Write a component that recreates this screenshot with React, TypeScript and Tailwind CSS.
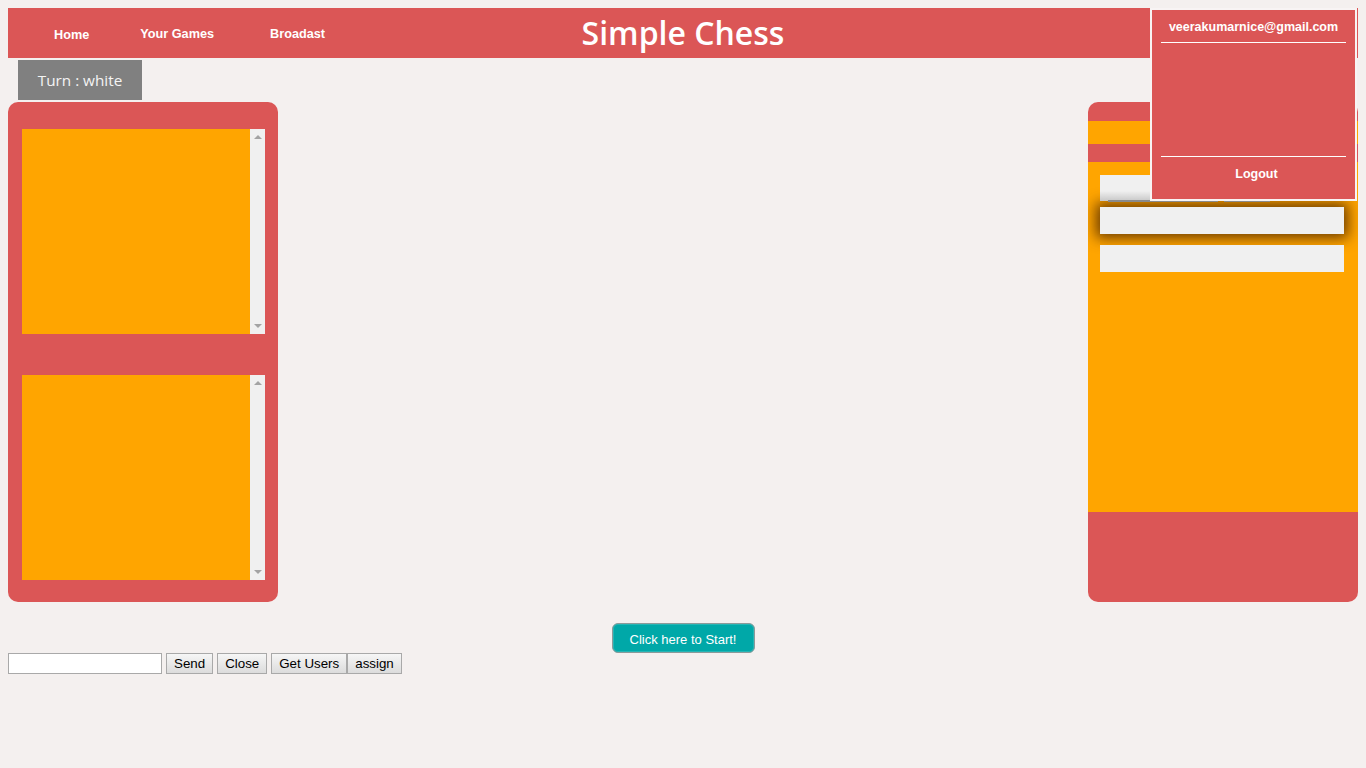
import React from "react";

const sans = "font-['Liberation_Sans',Arial,sans-serif]";

function ScrollBox() {
  return (
    <div className="flex h-[205px] w-[243px]">
      <div className="flex-1 bg-[#ffa500]" />
      <div className="flex w-[15px] flex-col items-center justify-between bg-[#f0f0f0] py-[6px]">
        <div className="h-0 w-0 border-x-[4px] border-b-[4px] border-x-transparent border-b-[#a3a3a3]" />
        <div className="h-0 w-0 border-x-[4px] border-t-[4px] border-x-transparent border-t-[#a3a3a3]" />
      </div>
    </div>
  );
}

export default function App() {
  return (
    <div className={`relative min-h-[768px] bg-[#f4f0ef] pt-2 ${sans}`}>
      {/* header bar */}
      <header className="mx-2 grid h-[50px] grid-cols-[1fr_auto_1fr] items-center bg-[#db5656] text-white">
        <nav className="flex items-center pl-[46px] pt-[3px] text-[12.7px] font-bold">
          <a className="mt-[2px]">Home</a>
          <a className="ml-[51px]">Your Games</a>
          <a className="ml-[56px]">Broadast</a>
        </nav>
        <h1 className="font-['Open_Sans',sans-serif] text-[32px] font-semibold leading-none">Simple Chess</h1>
        <div />
      </header>

      {/* turn indicator */}
      <div className="ml-[18px] mt-[2px] flex h-[40px] w-[124px] items-center justify-center bg-[#808080] font-['Open_Sans',sans-serif] text-[15.3px] text-[#f4f4f4]">
        Turn : white
      </div>

      {/* main area */}
      <div className="mx-2 mt-[2px] flex justify-between">
        <div className="flex h-[500px] w-[270px] flex-col gap-[41px] rounded-[10px] bg-[#db5656] pl-[14px] pt-[27px]">
          <ScrollBox />
          <ScrollBox />
        </div>

        <div className="flex h-[500px] w-[270px] flex-col overflow-hidden rounded-[10px] bg-[#db5656]">
          <div className="h-[19px]" />
          <div className="h-[23px] bg-[#ffa500]" />
          <div className="h-[18px]" />
          <div className="flex h-[350px] flex-col bg-[#ffa500] pl-3 pr-[14px] pt-[13px]">
            <div className="relative h-[26px] bg-[#f0f0f0]">
              <div className="absolute bottom-0 left-0 right-0 h-[10px] bg-gradient-to-b from-[#f0f0f0] to-[#c8c8c8]" />
              <div className="absolute -bottom-[1px] left-[8px] h-[2px] w-[110px] bg-[#8a8a8a]" />
              <div className="absolute -bottom-[1px] left-[124px] h-[2px] w-[46px] bg-[#8a8a8a]" />
            </div>
            <div className="mt-[6px] h-[27px] bg-[#f0f0f0] shadow-[0_0_14px_4px_rgba(80,40,0,0.85)]" />
            <div className="mt-[11px] h-[27px] bg-[#f0f0f0]" />
          </div>
        </div>
      </div>

      {/* start button */}
      <div className="mt-[21px] flex justify-center">
        <button className="h-[30px] w-[143px] rounded-[6px] border border-[#8a9a9a] bg-[#00a8a8] pt-[3px] text-[13px] text-white shadow-[inset_0_0_0_1px_rgba(255,255,255,0.15)]">
          Click here to Start!
        </button>
      </div>

      {/* message form */}
      <div className="ml-2 flex items-center text-[13.33px] text-black">
        <input className="h-[21px] w-[154px] border border-[#a9a9a9] bg-white" />
        <button className="ml-1 h-[21px] border border-[#a9a9a9] bg-gradient-to-b from-[#f6f6f6] to-[#dcdcdc] px-[7px]">Send</button>
        <button className="ml-1 h-[21px] border border-[#a9a9a9] bg-gradient-to-b from-[#f6f6f6] to-[#dcdcdc] px-[7px]">Close</button>
        <button className="ml-1 h-[21px] border border-[#a9a9a9] bg-gradient-to-b from-[#f6f6f6] to-[#dcdcdc] px-[7px]">Get Users</button>
        <button className="h-[21px] border border-[#a9a9a9] bg-gradient-to-b from-[#f6f6f6] to-[#dcdcdc] px-[7px]">assign</button>
      </div>

      {/* account dropdown */}
      <div className="absolute left-[1150px] top-[8px] flex h-[193px] w-[207px] flex-col border-2 border-[#f8f4f4] bg-[#db5656] px-[9px] text-[12.5px] font-bold text-white">
        <div className="flex h-[32px] items-center justify-center pt-[2px]">veerakumarnice@gmail.com</div>
        <div className="h-px bg-white" />
        <div className="h-[113px]" />
        <div className="h-px bg-white" />
        <div className="flex h-[34px] items-center justify-center pl-[6px]">Logout</div>
      </div>
    </div>
  );
}
